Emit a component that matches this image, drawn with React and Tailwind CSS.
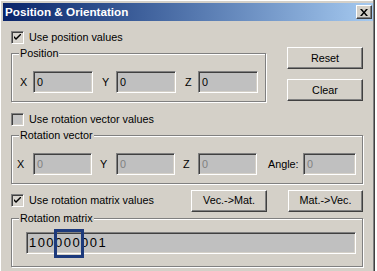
import React from "react";

// classic 3D edges
const sunken =
  "border border-t-[#808080] border-l-[#808080] border-b-white border-r-white shadow-[inset_1px_1px_0_#404040,inset_-1px_-1px_0_#d4d0c8]";
const raised =
  "border border-t-white border-l-white border-b-[#404040] border-r-[#404040] shadow-[inset_-1px_-1px_0_#808080,inset_1px_1px_0_#d4d0c8]";

function CheckBox({ checked, label }) {
  return (
    <div className="flex h-[13px] items-center">
      <span
        className={`flex h-[13px] w-[13px] shrink-0 items-center justify-center ${sunken} ${
          checked ? "bg-[#d8d5cf]" : "bg-[#c4c4c4]"
        }`}
      >
        {checked && (
          <svg width="7" height="7" viewBox="0 0 7 7">
            <path d="M0 2 L0 4 L2 6 L7 1 L7 -1 L2 4 Z" fill="#000" />
          </svg>
        )}
      </span>
      <span className="ml-[5px] leading-[13px]">{label}</span>
    </div>
  );
}

function Field({ w, value, disabled }) {
  return (
    <div
      className={`flex h-[22px] items-center bg-[#c0c0c0] pl-[3px] ${sunken} ${
        disabled ? "text-[#808080]" : "text-black"
      }`}
      style={{ width: w }}
    >
      {value}
    </div>
  );
}

function Button({ w, children }) {
  return (
    <div
      className={`flex h-[22px] shrink-0 items-center justify-center bg-[#d4d0c8] ${raised}`}
      style={{ width: w }}
    >
      {children}
    </div>
  );
}

function Group({ title, className = "", children }) {
  return (
    <fieldset
      className={`m-0 min-w-0 border border-[#808080] p-0 shadow-[inset_1px_1px_0_#fff,1px_1px_0_#fff] ${className}`}
    >
      <legend className="ml-[7px] bg-[#d4d0c8] px-[1px] leading-[13px]">
        {title}
      </legend>
      {children}
    </fieldset>
  );
}

export default function App() {
  return (
    <div className="h-[271px] w-[377px] overflow-hidden bg-white font-['Liberation_Sans',Arial,sans-serif] text-[10.8px] text-black">
      <div className="h-[271px] w-[375px] border-r border-r-[#404040] bg-[#d4d0c8] pl-[3px] pt-[3px] shadow-[inset_-1px_0_0_#808080,inset_1px_1px_0_#fff]">
        {/* title bar */}
        <div className="flex h-[18px] w-[370px] items-center justify-between bg-gradient-to-r from-[#0a246a] to-[#a6caf0] pl-[2px]">
          <span className="text-[11.7px] font-bold leading-none text-white">
            Position &amp; Orientation
          </span>
          <div
            className={`mr-[1px] flex h-[14px] w-[16px] items-center justify-center bg-[#d4d0c8] ${raised}`}
          >
            <svg width="8" height="7" viewBox="0 0 8 7">
              <path
                d="M0 0 H2 L4 2.5 L6 0 H8 L5 3.5 L8 7 H6 L4 4.5 L2 7 H0 L3 3.5 Z"
                fill="#000"
              />
            </svg>
          </div>
        </div>

        {/* body */}
        <div className="pl-[8px]">
          <div className="flex">
            <div className="w-[255px]">
              <div className="mt-[10px]">
                <CheckBox checked label="Use position values" />
              </div>
              <Group title="Position" className="mt-[3px] w-[255px]">
                <div className="mb-[8px] mt-[11px] flex items-center pl-[8px]">
                  <span className="w-[13px]">X</span>
                  <Field w={60} value="0" />
                  <span className="ml-[9px] w-[14px]">Y</span>
                  <Field w={60} value="0" />
                  <span className="ml-[9px] w-[13px]">Z</span>
                  <Field w={60} value="0" />
                </div>
              </Group>
            </div>
            <div className="ml-[21px] mt-[26px] flex flex-col gap-[10px]">
              <Button w={76}>Reset</Button>
              <Button w={76}>Clear</Button>
            </div>
          </div>

          <div className="mt-[11px]">
            <CheckBox label="Use rotation vector values" />
          </div>
          <Group title="Rotation vector" className="mt-[3px] w-[352px]">
            <div className="mb-[8px] mt-[11px] flex items-center pl-[5px]">
              <span className="w-[16px]">X</span>
              <Field w={59} value="0" disabled />
              <span className="ml-[8px] w-[16px]">Y</span>
              <Field w={59} value="0" disabled />
              <span className="ml-[8px] w-[15px]">Z</span>
              <Field w={59} value="0" disabled />
              <span className="ml-[11px] w-[35px]">Angle:</span>
              <Field w={53} value="0" disabled />
            </div>
          </Group>

          <div className="mt-[5px] flex h-[23px] w-[352px] items-center">
            <div className="w-[180px]">
              <CheckBox checked label="Use rotation matrix values" />
            </div>
            <Button w={76}>Vec.-&gt;Mat.</Button>
            <div className="ml-[21px]">
              <Button w={75}>Mat.-&gt;Vec.</Button>
            </div>
          </div>

          <Group title="Rotation matrix" className="w-[352px]">
            <div className="relative mb-[12px] ml-[14px] mt-[7px] w-[330px]">
              <div
                className={`flex h-[22px] items-center bg-[#c0c0c0] pl-[2px] text-[13px] tracking-[1.45px] ${sunken}`}
              >
                100000001
              </div>
              <div className="absolute left-[28px] top-[-3px] h-[29px] w-[30px] border-[3px] border-[#1d3a7c]" />
            </div>
          </Group>
        </div>
      </div>
    </div>
  );
}
